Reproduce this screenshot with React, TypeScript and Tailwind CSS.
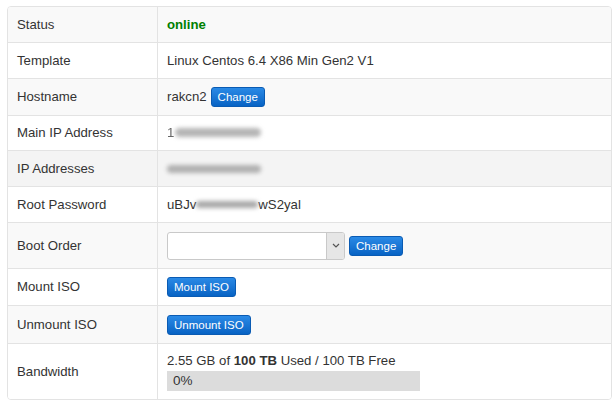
import React from 'react';

function Btn({ children }: { children: React.ReactNode }) {
  return (
    <button className="h-[20px] px-[6px] rounded-[3px] border border-[#0a5bb3] bg-gradient-to-b from-[#2a8ae6] to-[#0763c4] text-white text-[11.5px] leading-[18px]">
      {children}
    </button>
  );
}

const rows: { label: string; h: string; bg: string; value: React.ReactNode }[] = [
  { label: 'Status', h: 'h-[35px]', bg: 'bg-[#f9f9f9]', value: <span className="font-bold text-[#008000]">online</span> },
  { label: 'Template', h: 'h-[36px]', bg: 'bg-white', value: 'Linux Centos 6.4 X86 Min Gen2 V1' },
  {
    label: 'Hostname', h: 'h-[37px]', bg: 'bg-[#f9f9f9]',
    value: (
      <div className="flex items-center gap-[4px]">
        <span>rakcn2</span>
        <Btn>Change</Btn>
      </div>
    ),
  },
  {
    label: 'Main IP Address', h: 'h-[35px]', bg: 'bg-white',
    value: (
      <div className="flex items-center">
        <span className="text-[#666] blur-[0.5px]">1</span>
        <span className="inline-block w-[86px] h-[9px] ml-[1px] rounded-full bg-[#b5b5b5] blur-[2px]" />
      </div>
    ),
  },
  {
    label: 'IP Addresses', h: 'h-[36px]', bg: 'bg-[#f4f4f4]',
    value: (
      <div className="flex items-center">
        <span className="inline-block w-[94px] h-[8px] rounded-full bg-[#b0b0b0] blur-[2px]" />
      </div>
    ),
  },
  {
    label: 'Root Password', h: 'h-[36px]', bg: 'bg-white',
    value: (
      <div className="flex items-center">
        <span>uBJv</span>
        <span className="inline-block w-[62px] h-[7px] rounded-full bg-[#a8a8a8] blur-[2px]" />
        <span>wS2yal</span>
      </div>
    ),
  },
  {
    label: 'Boot Order', h: 'h-[46px]', bg: 'bg-[#f9f9f9]',
    value: (
      <div className="flex items-center gap-[4px]">
        <div className="flex w-[178px] h-[28px] border border-[#c9c9c9] rounded-[3px] bg-white overflow-hidden">
          <div className="flex-1" />
          <div className="w-[18px] border-l border-[#c9c9c9] bg-[#e6e6e6] flex items-center justify-center">
            <svg width="8" height="5" viewBox="0 0 8 5" fill="none" stroke="#555" strokeWidth="1.2">
              <path d="M1 1l3 3 3-3" />
            </svg>
          </div>
        </div>
        <Btn>Change</Btn>
      </div>
    ),
  },
  { label: 'Mount ISO', h: 'h-[37px]', bg: 'bg-white', value: <Btn>Mount ISO</Btn> },
  { label: 'Unmount ISO', h: 'h-[38px]', bg: 'bg-[#f9f9f9]', value: <Btn>Unmount ISO</Btn> },
  {
    label: 'Bandwidth', h: 'h-[56px]', bg: 'bg-white',
    value: (
      <div className="flex flex-col">
        <span className="leading-[16px]">
          2.55 GB of <b>100 TB</b> Used / 100 TB Free
        </span>
        <div className="mt-[2px] w-[253px] h-[20px] bg-[#dcdcdc] pl-[6px] leading-[20px] text-[13.5px]">0%</div>
      </div>
    ),
  },
];

export default function App() {
  return (
    <div className="w-[614px] h-[402px] bg-white pt-[6px] pl-[7px] font-['Liberation_Sans',Arial,sans-serif] text-[13.2px] text-[#333]">
      <div className="w-[605px] border border-[#e3e3e3] rounded-[4px] overflow-hidden">
        {rows.map((r, i) => (
          <div key={r.label} className={`flex ${r.h} ${r.bg} ${i > 0 ? 'border-t border-[#e3e3e3]' : ''}`}>
            <div className="w-[150px] shrink-0 border-r border-[#e3e3e3] flex items-center pl-[9px]">{r.label}</div>
            <div className="flex-1 flex items-center pl-[9px]">{r.value}</div>
          </div>
        ))}
      </div>
    </div>
  );
}
